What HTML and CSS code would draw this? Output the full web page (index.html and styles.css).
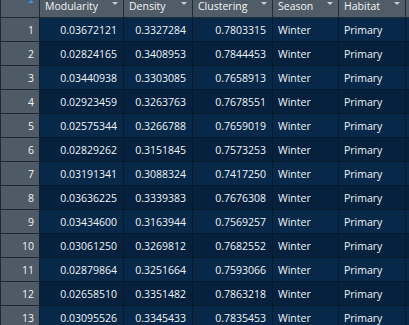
FILE: index.html
```html
<!DOCTYPE html>
<html>
<head>
<meta charset="utf-8">
<link rel="stylesheet" href="styles.css">
</head>
<body>
<table class="grid">
  <colgroup>
    <col class="c-idx"><col class="c-mod"><col class="c-den"><col class="c-clu"><col class="c-sea"><col class="c-hab"><col class="c-ext">
  </colgroup>
  <thead>
    <tr>
      <th class="idx-h"><span class="sort"></span></th>
      <th><div class="hd"><span>Modularity</span><span class="caret"></span></div></th>
      <th><div class="hd"><span>Density</span><span class="caret"></span></div></th>
      <th><div class="hd"><span>Clustering</span><span class="caret"></span></div></th>
      <th><div class="hd"><span>Season</span><span class="caret"></span></div></th>
      <th><div class="hd"><span>Habitat</span><span class="caret"></span></div></th>
      <th></th>
    </tr>
  </thead>
  <tbody>
    <tr><td class="idx">1</td><td class="num">0.03672121</td><td class="num">0.3327284</td><td class="num">0.7803315</td><td>Winter</td><td>Primary</td><td></td></tr>
    <tr><td class="idx">2</td><td class="num">0.02824165</td><td class="num">0.3408953</td><td class="num">0.7844453</td><td>Winter</td><td>Primary</td><td></td></tr>
    <tr><td class="idx">3</td><td class="num">0.03440938</td><td class="num">0.3303085</td><td class="num">0.7658913</td><td>Winter</td><td>Primary</td><td></td></tr>
    <tr><td class="idx">4</td><td class="num">0.02923459</td><td class="num">0.3263763</td><td class="num">0.7678551</td><td>Winter</td><td>Primary</td><td></td></tr>
    <tr><td class="idx">5</td><td class="num">0.02575344</td><td class="num">0.3266788</td><td class="num">0.7659019</td><td>Winter</td><td>Primary</td><td></td></tr>
    <tr><td class="idx">6</td><td class="num">0.02829262</td><td class="num">0.3151845</td><td class="num">0.7573253</td><td>Winter</td><td>Primary</td><td></td></tr>
    <tr><td class="idx">7</td><td class="num">0.03191341</td><td class="num">0.3088324</td><td class="num">0.7417250</td><td>Winter</td><td>Primary</td><td></td></tr>
    <tr><td class="idx">8</td><td class="num">0.03636225</td><td class="num">0.3339383</td><td class="num">0.7676308</td><td>Winter</td><td>Primary</td><td></td></tr>
    <tr><td class="idx">9</td><td class="num">0.03434600</td><td class="num">0.3163944</td><td class="num">0.7569257</td><td>Winter</td><td>Primary</td><td></td></tr>
    <tr><td class="idx">10</td><td class="num">0.03061250</td><td class="num">0.3269812</td><td class="num">0.7682552</td><td>Winter</td><td>Primary</td><td></td></tr>
    <tr><td class="idx">11</td><td class="num">0.02879864</td><td class="num">0.3251664</td><td class="num">0.7593066</td><td>Winter</td><td>Primary</td><td></td></tr>
    <tr><td class="idx">12</td><td class="num">0.02658510</td><td class="num">0.3351482</td><td class="num">0.7863218</td><td>Winter</td><td>Primary</td><td></td></tr>
    <tr><td class="idx">13</td><td class="num">0.03095526</td><td class="num">0.3345433</td><td class="num">0.7835453</td><td>Winter</td><td>Primary</td><td></td></tr>
  </tbody>
</table>
</body>
</html>
```

FILE: styles.css
```css
html, body {
  margin: 0;
  padding: 0;
  background: #062240;
  overflow: hidden;
  width: 409px;
  height: 325px;
}

.grid {
  border-collapse: collapse;
  table-layout: fixed;
  width: 420px;
  font-family: "Open Sans", "Noto Sans", sans-serif;
  font-size: 10.5px;
  line-height: 13px;
  color: #f0f4f8;
}

.c-idx { width: 39px; }
.c-mod { width: 84px; }
.c-den { width: 69px; }
.c-clu { width: 80px; }
.c-sea { width: 66px; }
.c-hab { width: 67px; }
.c-ext { width: 15px; }

th {
  height: 17px;
  padding: 0 5px;
  background: #505c67;
  border: 1px solid #202b35;
  border-top: none;
  text-align: left;
  vertical-align: top;
  font-weight: normal;
  color: #f2f4f6;
}

.hd {
  display: flex;
  align-items: flex-start;
  justify-content: space-between;
  white-space: nowrap;
}

.caret {
  width: 0;
  height: 0;
  margin-top: 2px;
  border-left: 3px solid transparent;
  border-right: 3px solid transparent;
  border-top: 3px solid #c9ced3;
}

.idx-h {
  position: relative;
}

.sort {
  position: absolute;
  left: 27px;
  top: 0;
  width: 0;
  height: 0;
  border-left: 3px solid transparent;
  border-right: 3px solid transparent;
  border-bottom: 3px solid #3a93e6;
}

td {
  height: 17px;
  padding: 6px 5px 0;
  vertical-align: top;
  border: 1px solid #0b1a2a;
  border-top: none;
  white-space: nowrap;
  overflow: hidden;
}

tbody tr:nth-child(odd) td { background: #082849; }
tbody tr:nth-child(even) td { background: #05213e; }

tbody tr td.idx {
  background: #4e5a65;
  text-align: right;
  border-color: #1e2933;
  border-right-color: #0c1d2d;
  color: #f2f4f6;
}

.num {
  text-align: right;
  padding-right: 6px;
}
```
